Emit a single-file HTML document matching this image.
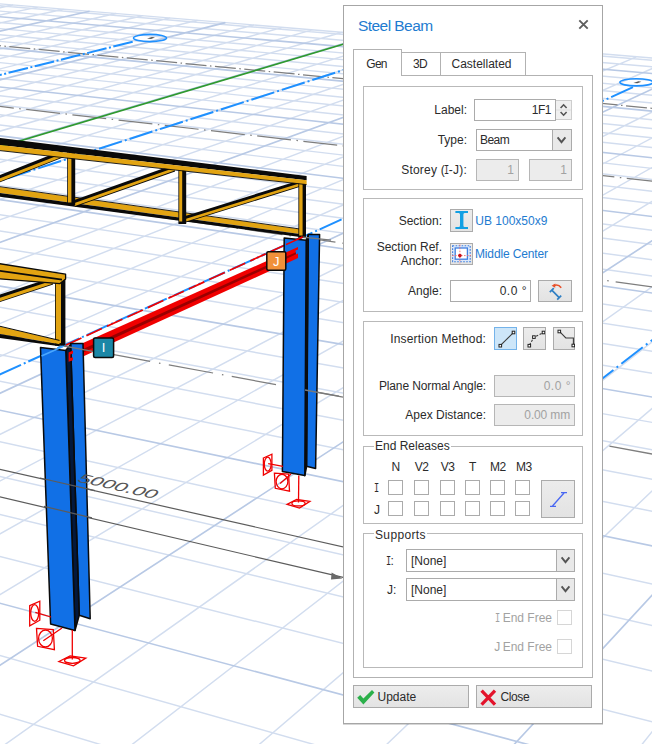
<!DOCTYPE html>
<html>
<head>
<meta charset="utf-8">
<title>Steel Beam</title>
<style>
html,body{margin:0;padding:0;background:#fff;}
body{width:652px;height:744px;position:relative;overflow:hidden;font-family:"Liberation Sans","DejaVu Sans",sans-serif;font-size:12px;line-height:14px;color:#2b2b2b;}
#scene{position:absolute;left:0;top:0;width:652px;height:744px;}
#dlg{position:absolute;left:343px;top:5px;width:258px;height:717px;background:#fff;border:1px solid #a6a6a6;box-shadow:0 1px 0 rgba(0,0,0,0.16);}
#dlg *{box-sizing:border-box;}
.abs{position:absolute;white-space:nowrap;}
.title{position:absolute;left:14px;top:11px;font-size:15.5px;line-height:18px;color:#1e7bd0;letter-spacing:-0.55px;white-space:nowrap;}
.closex{position:absolute;left:234px;top:13px;width:11px;height:11px;}
.tab{position:absolute;border:1px solid #b2b2b2;border-bottom:none;background:#fff;text-align:center;color:#2b2b2b;white-space:nowrap;}
.pane{position:absolute;left:9px;top:69px;width:240px;height:603px;border:1px solid #b2b2b2;background:#fff;}
.grp{position:absolute;left:19px;width:220px;border:1px solid #b9b9b9;}
.lbl{position:absolute;text-align:right;white-space:nowrap;color:#2b2b2b;}
.inp{position:absolute;border:1px solid #ababab;background:#fff;text-align:right;white-space:nowrap;line-height:20px;}
.dis{background:#ececec;color:#a2a2a2;border-color:#b6b6b6;}
.btn{position:absolute;border:1px solid #ababab;background:linear-gradient(#ececec,#e3e3e3);}
.big{background:linear-gradient(#ededed,#e3e3e3);}
.link{position:absolute;color:#1e7bd0;white-space:nowrap;}
.cb{position:absolute;width:15px;height:15px;border:1px solid #ababab;background:#fff;}
.legend{position:absolute;background:#fff;padding:0 1px;white-space:nowrap;}
.hd{position:absolute;top:454px;width:15px;text-align:center;white-space:nowrap;letter-spacing:-0.5px;}
.dd{position:absolute;right:0;top:0;bottom:0;width:18px;border-left:1px solid #ababab;background:#e9e9e9;}
.gray{color:#a2a2a2;}
.si{font-family:"Liberation Mono","DejaVu Sans Mono",monospace;margin:0 -1.6px;letter-spacing:0;display:inline-block;transform:scaleX(0.72);}
</style>

</head>
<body>
<svg id="scene" width="652" height="744" viewBox="0 0 652 744">
<path d="M-20 708.2L165.1 764 M-20 649.8L382.7 764 M-20 551.5L672 726.7 M-20 509.7L672 675.9 M-20 471.9L672 630 M-20 437.5L672 588.3 M-20 377.3L672 515.2 M-20 350.9L672 483 M-20 326.4L672 453.4 M-20 303.8L672 425.9 M-20 263.2L672 376.6 M-20 244.9L672 354.4 M-20 227.9L672 333.7 M-20 211.8L672 314.2 M-20 182.6L672 278.7 M-20 169.3L672 262.5 M-20 156.6L672 247.2 M-20 144.7L672 232.7 M-20 122.7L672 205.9 M-20 112.5L672 193.6 M-20 102.8L672 181.8 M-20 93.6L672 170.6 M-20 76.4L672 149.7 M-20 68.3L672 139.9 M-20 60.6L672 130.6 M-20 53.3L672 121.7 M-20 39.5L672 104.9 M-20 33L672 97 M-20 26.8L672 89.5 M-20 20.8L672 82.2 M-20 9.4L672 68.4 M-20 4.1L672 61.9 M-20 2.2L672 59.7 M-20 4.6L-11.7 2.9 M-20 11.8L13 5 M-20 19.3L38.1 7.1 M-20 27.2L63.6 9.2 M-20 44.3L115.9 13.5 M-20 53.6L142.6 15.8 M-20 63.4L169.8 18 M-20 73.8L197.4 20.3 M-20 96.7L253.9 25 M-20 109.2L282.9 27.4 M-20 122.6L312.4 29.9 M-20 136.9L342.3 32.3 M-20 168.8L403.8 37.4 M-20 186.6L435.3 40.1 M-20 205.9L467.4 42.7 M-20 226.8L500 45.4 M-20 274.5L567 51 M-20 301.8L601.5 53.9 M-20 331.9L636.5 56.8 M-20 365.3L672 59.8 M-20 444.3L672 102.2 M-20 491.5L672 127.5 M-20 545.1L672 156.3 M-20 606.7L672 189.4 M-20 762.2L672 272.8 M106.9 764L672 326.5 M236.4 764L672 391.4 M366.2 764L672 471.8 M626.3 764L672 706.9" stroke="#d2ddef" stroke-width="1.45" fill="none"/>
<path d="M-20 597.9L600.9 764 M-20 406.1L672 550.1 M-20 282.8L672 400.4 M-20 196.8L672 295.9 M-20 133.4L672 219 M-20 84.8L672 159.9 M-20 46.2L672 113.1 M-20 15L672 75.2 M-20 35.5L89.6 11.3 M-20 84.9L225.4 22.6 M-20 152.2L372.8 34.9 M-20 249.6L533.2 48.2 M-20 402.6L672 79.8 M-20 678.3L672 227.7 M496.1 764L672 573.6" stroke="#b8c9e5" stroke-width="1.65" fill="none"/>
<line x1="-20" y1="330" x2="672" y2="457.7" stroke="#7e7e7e" stroke-width="1.25" stroke-dasharray="45 9 1.5 8.5"/>
<line x1="-20" y1="191.7" x2="672" y2="289.8" stroke="#7e7e7e" stroke-width="1.25" stroke-dasharray="38 7 1.5 7"/>
<line x1="-20" y1="104.2" x2="672" y2="183.5" stroke="#7e7e7e" stroke-width="1.25" stroke-dasharray="34 5.5 1.5 5.5"/>
<line x1="-20" y1="43.8" x2="672" y2="110.2" stroke="#7e7e7e" stroke-width="1.25" stroke-dasharray="21 3.5 1.5 3.5"/>
<line x1="-20" y1="152.9" x2="374" y2="35" stroke="#2f9a2f" stroke-width="1.6"/>
<line x1="132.7" y1="41.7" x2="-20" y2="80" stroke="#1e90ff" stroke-width="2" stroke-dasharray="20 2.5 2 2.5"/>
<line x1="365.6" y1="62.9" x2="-20" y2="187.1" stroke="#1e90ff" stroke-width="2" stroke-dasharray="24 3 2 3"/>
<line x1="633" y1="87.2" x2="-20" y2="383.4" stroke="#1e90ff" stroke-width="2" stroke-dasharray="24 3 2 3"/>
<line x1="672" y1="324.7" x2="440.7" y2="503.3" stroke="#1e90ff" stroke-width="2" stroke-dasharray="27 4 2 4"/>
<ellipse cx="150" cy="38" rx="16.5" ry="3.6" fill="none" stroke="#1e90ff" stroke-width="1.6"/>
<path d="M147 38.6 l5 -1.6 l3 0.4 l-4 1.6z" fill="#555"/>
<ellipse cx="636.4" cy="82.3" rx="16.5" ry="3.6" fill="none" stroke="#1e90ff" stroke-width="1.6"/>
<path d="M633.4 82.9 l5 -1.6 l3 0.4 l-4 1.6z" fill="#555"/>
<line x1="-827.3" y1="282.1" x2="374.9" y2="554.1" stroke="#5c5c5c" stroke-width="1.2"/>
<line x1="-869.7" y1="292.8" x2="344.2" y2="577.7" stroke="#5c5c5c" stroke-width="1.2"/>
<path d="M342.4 578.4 L331.6 572.4 L331 579.4 Z" fill="#6a6a6a"/>
<polygon points="-2,186.6 300,229.2 300,234 -2,192.8" fill="#e2a412" />
<polygon points="-2,192.8 300,234 300,237 -2,196.6" fill="#0a0a0a" />
<line x1="-2" y1="186.4" x2="300" y2="229" stroke="#0a0a0a" stroke-width="0.9"/>
<polygon points="-5.2,177 61.8,150.6 64.2,157 -2.8,183.4" fill="#0a0a0a" />
<polygon points="-4.1,179.8 62.9,153.4 64,156.2 -3,182.6" fill="#e2a412" />
<polygon points="72.9,200.4 172.9,165 175.1,171.4 75.1,206.8" fill="#0a0a0a" />
<polygon points="73.9,203.3 173.9,167.9 174.9,170.6 74.9,206" fill="#e2a412" />
<polygon points="182.1,217 299.1,180.5 300.9,186.5 183.9,223" fill="#0a0a0a" />
<polygon points="182.9,219.7 299.9,183.2 300.7,185.7 183.7,222.2" fill="#e2a412" />
<polygon points="67.2,148 75.2,148 75.2,205 67.2,205" fill="#0a0a0a" />
<polygon points="68,148 71.4,148 71.4,202.5 68,202.5" fill="#e2a412" />
<polygon points="178.4,168 186.2,168 186.2,224 178.4,224" fill="#0a0a0a" />
<polygon points="179.2,168 182.2,168 182.2,221.5 179.2,221.5" fill="#e2a412" />
<polygon points="298.4,181 306,181 306,238 298.4,238" fill="#0a0a0a" />
<polygon points="299.2,181 302.6,181 302.6,235.5 299.2,235.5" fill="#e2a412" />
<polygon points="-2,137.8 306.6,176 306.6,180.2 -2,144.7" fill="#0a0a0a" />
<polygon points="-2,144.7 306.6,180.2 306.6,184.4 -2,150.2" fill="#e2a412" />
<line x1="-2" y1="150.4" x2="306.6" y2="184.6" stroke="#0a0a0a" stroke-width="0.9"/>
<polygon points="-5.1,296.3 50.9,277.9 53.1,284.5 -2.9,302.9" fill="#0a0a0a" />
<polygon points="-4.2,299.1 51.8,280.7 52.8,283.8 -3.2,302.2" fill="#e2a412" />
<polygon points="55,276 65.4,276 65.4,345.6 55,345.6" fill="#0a0a0a" />
<polygon points="55.8,276 61,276 61,343.1 55.8,343.1" fill="#e2a412" />
<polygon points="-2,263.4 65.6,274.2 65.6,279 60,283.6 -2,278.8" fill="#e2a412" stroke="#0a0a0a" stroke-width="1.3" stroke-linejoin="round" />
<line x1="-2" y1="270.6" x2="62" y2="279.6" stroke="#0a0a0a" stroke-width="1.6"/>
<polygon points="-2,326 59.5,340.6 59.5,344.2 -2,333.6" fill="#e2a412" />
<polygon points="-2,333.6 59.5,344.2 59.5,346.2 -2,337.6" fill="#0a0a0a" />
<line x1="-2" y1="325.8" x2="59.5" y2="340.4" stroke="#0a0a0a" stroke-width="1"/>
<polygon points="83,343 298,247 298,258 83,356.5" fill="#f00000" />
<polygon points="83,349 298,251.2 298,253.8 83,352.4" fill="#9a0000" />
<line x1="66" y1="345" x2="302.6" y2="237" stroke="#f00000" stroke-width="1.7" stroke-dasharray="17 5.5"/>
<polygon points="70.6,343.6 83,343.6 90.2,618.8 79.2,615.2" fill="#1170e6" stroke="#0a0a0a" stroke-width="1.5" stroke-linejoin="round" />
<polygon points="65.8,350.4 70.6,344.5 79.2,615.2 75,630.4" fill="#03183c" stroke="#0a0a0a" stroke-width="1.6" stroke-linejoin="round" />
<polygon points="40.5,347.6 65.8,350.4 75,630.4 50.6,624" fill="#1170e6" stroke="#0a0a0a" stroke-width="1.5" stroke-linejoin="round" />
<path d="M68.6 352.4 l4.4 -2 v3 l-2.6 1.2 v3.4 l2.6 -0.8 v3 l-4.4 1.6z" fill="#f00000"/>
<polygon points="308,234.4 319.6,234.4 315.6,468.6 306.4,466.2" fill="#1170e6" stroke="#0a0a0a" stroke-width="1.5" stroke-linejoin="round" />
<polygon points="306.2,240.2 308.2,235.6 306.6,466.2 304.8,475.6" fill="#03183c" stroke="#0a0a0a" stroke-width="1.6" stroke-linejoin="round" />
<polygon points="284.2,238 306.2,240.2 304.8,475.6 282.4,471.4" fill="#1170e6" stroke="#0a0a0a" stroke-width="1.5" stroke-linejoin="round" />
<polygon points="284,253.2 298,247 298,249.4 295.6,250.4 295.6,254.6 298,253.6 298,258 284,264.4" fill="#f00000" />
<polygon points="284,257.6 296,252.2 296,254.2 284,260" fill="#9a0000" />
<line x1="286" y1="244.6" x2="302.6" y2="237" stroke="#f00000" stroke-width="1.5"/>
<line x1="64" y1="346" x2="94" y2="351.6" stroke="#7a7a7a" stroke-width="1.3"/>
<line x1="303" y1="237.2" x2="331" y2="240.2" stroke="#7a7a7a" stroke-width="1.3"/>
<line x1="305" y1="390" x2="343" y2="397.2" stroke="#7a7a7a" stroke-width="1.3"/>
<line x1="41.5" y1="356" x2="63" y2="346.4" stroke="#4aa8ff" stroke-width="1.6"/>
<rect x="93.6" y="338" width="20" height="19.4" rx="1.5" fill="#1b87a6" stroke="#0a0a0a" stroke-width="1.5"/>
<text x="103.6" y="352.4" font-family="Liberation Sans, sans-serif" font-size="13" fill="#fff" text-anchor="middle">I</text>
<rect x="266.8" y="251.8" width="19" height="18.4" rx="1.5" fill="#f0913a" stroke="#0a0a0a" stroke-width="1.5"/>
<text x="276.3" y="265.6" font-family="Liberation Sans, sans-serif" font-size="13" fill="#fff" text-anchor="middle">J</text>
<path d="M29.7 605.7 l10.1 -4.5 v19 l-10.1 5.6 z" stroke="#f00000" stroke-width="1.3" fill="none"/>
<ellipse cx="34.7" cy="613" rx="4" ry="8.3" stroke="#f00000" stroke-width="1.3" fill="none"/>
<line x1="35.3" y1="612.4" x2="51" y2="617" stroke="#f00000" stroke-width="1.3" fill="none"/>
<path d="M36.5 628.4 l16.8 1.1 l1.1 20.2 l-16.8 -3.4 z" stroke="#f00000" stroke-width="1.3" fill="none"/>
<ellipse cx="45.5" cy="638.5" rx="6.9" ry="8.5" stroke="#f00000" stroke-width="1.3" fill="none"/>
<line x1="43.3" y1="640.7" x2="62" y2="628" stroke="#f00000" stroke-width="1.3" fill="none"/>
<path d="M58.9 661.5 l11.2 -5.6 l15.7 2.2 l-12.3 7.8 z" stroke="#f00000" stroke-width="1.3" fill="none"/>
<ellipse cx="72.3" cy="660.4" rx="7.8" ry="2.9" stroke="#f00000" stroke-width="1.3" fill="none"/>
<line x1="72.3" y1="659.4" x2="72.3" y2="630" stroke="#f00000" stroke-width="1.3" fill="none"/>
<path d="M263.4 458 l8.5 -3.8 v16.1 l-8.5 4.8 z" stroke="#f00000" stroke-width="1.3" fill="none"/>
<ellipse cx="267.7" cy="464.2" rx="3.4" ry="7" stroke="#f00000" stroke-width="1.3" fill="none"/>
<line x1="268.2" y1="463.7" x2="283" y2="466.4" stroke="#f00000" stroke-width="1.3" fill="none"/>
<path d="M274.4 473.1 l14.2 0.9 l0.9 17.1 l-14.2 -2.8 z" stroke="#f00000" stroke-width="1.3" fill="none"/>
<ellipse cx="282" cy="481.6" rx="5.9" ry="7.2" stroke="#f00000" stroke-width="1.3" fill="none"/>
<line x1="280.1" y1="483.5" x2="291" y2="474" stroke="#f00000" stroke-width="1.3" fill="none"/>
<path d="M287.1 504.3 l9.5 -4.8 l13.3 1.9 l-10.4 6.6 z" stroke="#f00000" stroke-width="1.3" fill="none"/>
<ellipse cx="298.5" cy="503.4" rx="6.6" ry="2.5" stroke="#f00000" stroke-width="1.3" fill="none"/>
<line x1="298.5" y1="502.4" x2="298.8" y2="475.6" stroke="#f00000" stroke-width="1.3" fill="none"/>
<text transform="matrix(1.61 0.365 -0.55 0.87 76.5 481.4)" font-family="Liberation Sans, sans-serif" font-size="13.4" font-style="italic" fill="#565656" stroke="#fff" stroke-width="0">5000.00</text>
<line x1="40" y1="478" x2="95" y2="490.6" stroke="#5c5c5c" stroke-width="1.2"/>
<line x1="44" y1="506.4" x2="92" y2="517.8" stroke="#5c5c5c" stroke-width="1.2"/>
</svg>

<div id="dlg">
  <div class="title">Steel Beam</div>
  <svg class="closex" viewBox="0 0 11 11"><path d="M1.3 1.3 L9.7 9.7 M9.7 1.3 L1.3 9.7" stroke="#5e5e5e" stroke-width="1.9" fill="none"/></svg>

  <!-- tabs -->
  <div class="tab" style="left:57px;top:46px;width:40px;height:24px;padding-top:4px;padding-right:2px;letter-spacing:-0.6px;">3D</div>
  <div class="tab" style="left:96px;top:46px;width:86px;height:24px;padding-top:4px;padding-right:3px;">Castellated</div>
  <div class="pane"></div>
  <div class="tab" style="left:9px;top:43px;width:49px;height:27px;padding-top:7px;padding-right:2px;letter-spacing:-0.8px;z-index:2;">Gen</div>

  <!-- group 1 -->
  <div class="grp" style="top:80px;height:104px;"></div>
  <div class="lbl" style="left:19px;width:104px;top:97px;">Label:</div>
  <div class="inp" style="left:130px;top:93px;width:82px;height:22px;padding-right:4px;letter-spacing:-0.5px;">1F1</div>
  <div class="abs" style="left:212px;top:94px;width:16px;height:20px;background:#f0f0f0;border:1px solid #cdcdcd;border-left:none;">
    <svg class="abs" style="left:0;top:0" width="15" height="18" viewBox="0 0 15 18"><path d="M0 9 H15" stroke="#dedede" stroke-width="1"/><path d="M4.6 7 L7.6 3.8 L10.6 7 M4.6 11 L7.6 14.2 L10.6 11" stroke="#555" stroke-width="1.6" fill="none"/></svg>
  </div>
  <div class="lbl" style="left:19px;width:104px;top:127px;">Type:</div>
  <div class="inp" style="left:132px;top:123px;width:96px;height:22px;text-align:left;padding-left:3px;letter-spacing:-0.55px;">Beam<div class="dd" style="width:19px"><svg class="abs" style="left:0;top:0" width="17" height="20" viewBox="0 0 17 20"><path d="M4.6 7.4 L8.5 12.2 L12.4 7.4" stroke="#555" stroke-width="1.9" fill="none"/></svg></div></div>
  <div class="lbl" style="left:19px;width:104px;top:157px;letter-spacing:0.2px;">Storey (<span class="si">I</span>-J):</div>
  <div class="inp dis" style="left:132px;top:153px;width:43px;height:22px;padding-right:4px;">1</div>
  <div class="inp dis" style="left:185px;top:153px;width:43px;height:22px;padding-right:4px;">1</div>

  <!-- group 2 -->
  <div class="grp" style="top:192px;height:114px;"></div>
  <div class="lbl" style="left:19px;width:79px;top:208px;">Section:</div>
  <div class="btn" style="left:106px;top:203px;width:23px;height:23px;">
    <svg class="abs" style="left:0;top:0" width="21" height="21" viewBox="0 0 21 21"><path d="M4.4 0.9 H17 V2.9 H13.6 Q12.4 3.1 12.4 4.6 V15.4 Q12.4 16.9 13.6 17.1 H17 V19.1 H4.4 V17.1 H7.8 Q9 16.9 9 15.4 V4.6 Q9 3.1 7.8 2.9 H4.4 Z" fill="#119fe3"/></svg>
  </div>
  <div class="link" style="left:131.3px;top:208px;">UB 100x50x9</div>
  <div class="lbl" style="left:19px;width:79px;top:234px;">Section Ref.<br>Anchor:</div>
  <div class="btn" style="left:106px;top:237px;width:23px;height:22px;">
    <svg class="abs" style="left:0;top:0" width="21" height="20" viewBox="0 0 21 20">
      <rect x="1.6" y="1.7" width="17.6" height="16" fill="#dbe8fb" stroke="#3f7fe0" stroke-width="1.1" stroke-dasharray="1.6 1.4"/>
      <rect x="4.2" y="4" width="12.2" height="11.2" fill="#fff" stroke="#3f7fe0" stroke-width="1.3"/>
      <path d="M1 11.6 H20 M8.9 0.6 V19.4" stroke="#f06a6a" stroke-width="0.9" stroke-dasharray="1.6 1.4"/>
      <circle cx="8.9" cy="11.6" r="1.8" fill="#c8101a"/>
    </svg>
  </div>
  <div class="link" style="left:131px;top:241px;letter-spacing:-0.15px;">Middle Center</div>
  <div class="lbl" style="left:19px;width:79px;top:278px;">Angle:</div>
  <div class="inp" style="left:106px;top:274px;width:81px;height:22px;padding-right:3px;letter-spacing:0.5px;">0.0 °</div>
  <div class="btn" style="left:194px;top:274px;width:34px;height:22px;">
    <svg class="abs" style="left:0;top:0" width="32" height="20" viewBox="0 0 32 20">
      <path d="M12.8 9.2 L20.2 16.6 M10.8 11.2 L14.8 7.2 M18.2 18.6 L22.2 14.6" stroke="#2f7fc4" stroke-width="1.7" fill="none"/>
      <path d="M14.6 4.6 C17.6 3.4 20.4 4.2 22.2 6.8" stroke="#e8502a" stroke-width="1.6" fill="none"/>
      <path d="M12.6 4.8 L16.4 2.4 L16.2 6.8 Z" fill="#e8502a"/>
    </svg>
  </div>

  <!-- group 3 -->
  <div class="grp" style="top:315px;height:115px;"></div>
  <div class="lbl" style="left:19px;width:123px;top:326px;letter-spacing:0.18px;">Insertion Method:</div>
  <div class="btn" style="left:150px;top:321px;width:23px;height:23px;background:#cde6f9;border-color:#74b3ea;">
    <svg class="abs" style="left:0;top:1px" width="21" height="20" viewBox="0 0 21 20"><path d="M5.5 16.4 L18.4 3.6" stroke="#3a3a3a" stroke-width="1.1"/><rect x="4" y="15.4" width="2.6" height="2.6" fill="#fff" stroke="#222" stroke-width="1"/><rect x="17.2" y="2.2" width="2.6" height="2.6" fill="#fff" stroke="#222" stroke-width="1"/></svg>
  </div>
  <div class="btn" style="left:179px;top:321px;width:23px;height:23px;">
    <svg class="abs" style="left:0;top:1px" width="21" height="20" viewBox="0 0 21 20"><path d="M5.5 16 L10 8.2 L20 3.4" stroke="#3a3a3a" stroke-width="1.1" fill="none" stroke-dasharray="2.2 1.6"/><rect x="4" y="15.4" width="2.6" height="2.6" fill="#fff" stroke="#222" stroke-width="1"/><rect x="8.6" y="6.8" width="2.6" height="2.6" fill="#fff" stroke="#222" stroke-width="1"/><rect x="18.2" y="2.2" width="2.6" height="2.6" fill="#fff" stroke="#222" stroke-width="1"/></svg>
  </div>
  <div class="btn" style="left:209px;top:321px;width:22px;height:23px;">
    <svg class="abs" style="left:0;top:0" width="21" height="21" viewBox="0 0 21 21"><path d="M5.4 3.4 L11.8 10 H19.4 V17.4" stroke="#3a3a3a" stroke-width="1.1" fill="none"/><rect x="4" y="2.2" width="2.6" height="2.6" fill="#fff" stroke="#222" stroke-width="1"/><rect x="18" y="16.2" width="2.6" height="2.6" fill="#fff" stroke="#222" stroke-width="1"/></svg>
  </div>
  <div class="lbl" style="left:19px;width:123px;top:373px;letter-spacing:-0.12px;">Plane Normal Angle:</div>
  <div class="inp dis" style="left:150px;top:369px;width:81px;height:22px;padding-right:3px;letter-spacing:0.5px;">0.0 °</div>
  <div class="lbl" style="left:19px;width:123px;top:402px;">Apex Distance:</div>
  <div class="inp dis" style="left:150px;top:398px;width:81px;height:22px;padding-right:4px;letter-spacing:-0.15px;">0.00 mm</div>

  <!-- group 4 -->
  <div class="grp" style="top:440px;height:78px;"></div>
  <div class="legend" style="left:30px;top:433px;">End Releases</div>
  <div class="hd" style="left:44px;">N</div>
  <div class="hd" style="left:70px;">V2</div>
  <div class="hd" style="left:96px;">V3</div>
  <div class="hd" style="left:121px;">T</div>
  <div class="hd" style="left:146px;">M2</div>
  <div class="hd" style="left:172px;">M3</div>
  <div class="abs" style="left:30.5px;top:475px;"><span class="si">I</span></div>
  <div class="abs" style="left:30px;top:497px;">J</div>
  <div class="cb" style="left:44px;top:474px;"></div><div class="cb" style="left:70px;top:474px;"></div><div class="cb" style="left:96px;top:474px;"></div><div class="cb" style="left:121px;top:474px;"></div><div class="cb" style="left:146px;top:474px;"></div><div class="cb" style="left:171px;top:474px;"></div>
  <div class="cb" style="left:44px;top:495px;"></div><div class="cb" style="left:70px;top:495px;"></div><div class="cb" style="left:96px;top:495px;"></div><div class="cb" style="left:121px;top:495px;"></div><div class="cb" style="left:146px;top:495px;"></div><div class="cb" style="left:171px;top:495px;"></div>
  <div class="btn" style="left:197px;top:474px;width:34px;height:38px;">
    <svg class="abs" style="left:0;top:0" width="32" height="36" viewBox="0 0 32 36"><path d="M10.5 25 L22 12 M8 25.4 H14 M19 11.6 H25" stroke="#4a68f2" stroke-width="1.3" fill="none"/></svg>
  </div>

  <!-- group 5 -->
  <div class="grp" style="top:527px;height:135px;"></div>
  <div class="legend" style="left:30px;top:522px;letter-spacing:0.35px;">Supports</div>
  <div class="abs" style="left:42.5px;top:548px;"><span class="si">I</span>:</div>
  <div class="inp" style="left:62px;top:543px;width:169px;height:23px;line-height:22px;text-align:left;padding-left:4px;">[None]<div class="dd"><svg class="abs" style="left:0;top:0" width="17" height="20" viewBox="0 0 17 20"><path d="M4.6 7.4 L8.5 12.2 L12.4 7.4" stroke="#555" stroke-width="1.9" fill="none"/></svg></div></div>
  <div class="abs" style="left:43px;top:577px;">J:</div>
  <div class="inp" style="left:62px;top:572px;width:169px;height:23px;line-height:22px;text-align:left;padding-left:4px;">[None]<div class="dd"><svg class="abs" style="left:0;top:0" width="17" height="20" viewBox="0 0 17 20"><path d="M4.6 7.4 L8.5 12.2 L12.4 7.4" stroke="#555" stroke-width="1.9" fill="none"/></svg></div></div>
  <div class="lbl gray" style="left:108px;width:100px;top:605px;"><span class="si">I</span> End Free</div>
  <div class="cb" style="left:213px;top:604px;border-color:#d6d6d6;"></div>
  <div class="lbl gray" style="left:108px;width:100px;top:634px;"><span style="letter-spacing:-0.5px;">J </span>End Free</div>
  <div class="cb" style="left:213px;top:633px;border-color:#d6d6d6;"></div>

  <!-- buttons -->
  <div class="btn big" style="left:9px;top:679px;width:116px;height:23px;">
    <svg class="abs" style="left:1.5px;top:2.5px" width="20" height="17" viewBox="0 0 20 17"><path d="M1.2 8.8 L4.2 6 L7.4 9.4 L16 1 L18.4 3.4 L7.4 15.4 Z" fill="#2bb04a"/></svg>
    <div class="abs" style="left:23.5px;top:4px;">Update</div>
  </div>
  <div class="btn big" style="left:132px;top:679px;width:116px;height:23px;">
    <svg class="abs" style="left:3px;top:2.5px" width="17" height="17" viewBox="0 0 17 17"><path d="M1.6 1.6 L15 15.6 M15 1.6 L1.6 15.6" stroke="#e3132b" stroke-width="3.3" fill="none"/></svg>
    <div class="abs" style="left:23.5px;top:4px;letter-spacing:-0.4px;">Close</div>
  </div>
</div>
</body>
</html>
